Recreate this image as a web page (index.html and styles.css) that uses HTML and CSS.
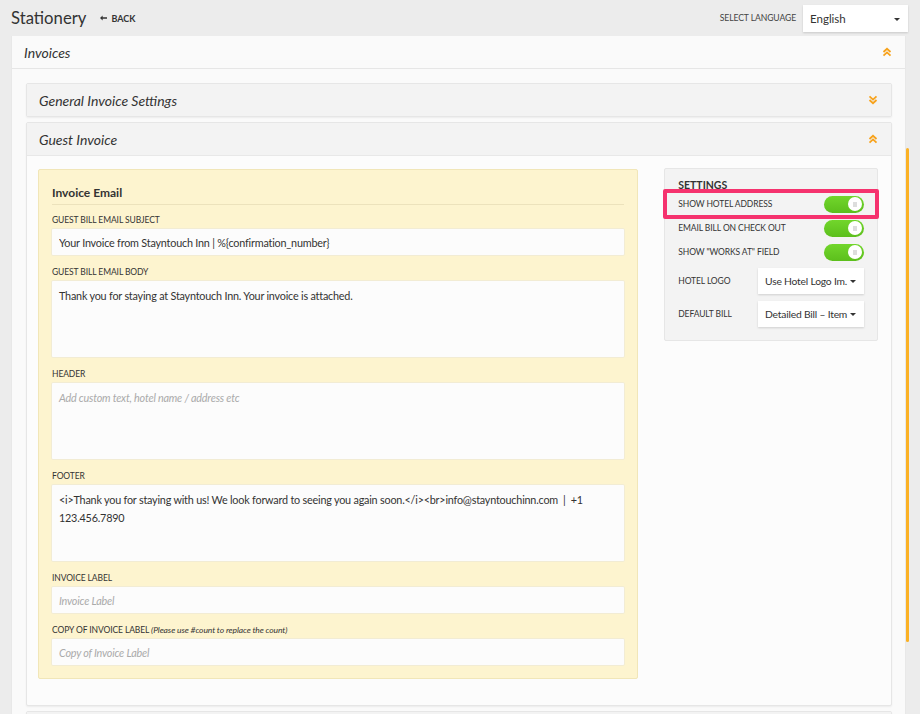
FILE: index.html
```html
<!DOCTYPE html>
<html lang="en">
<head>
    <meta charset="UTF-8">
    <meta name="viewport" content="width=device-width, initial-scale=1.0">
    <title>Stationery</title>
    <link rel="stylesheet" href="styles.css">
</head>
<body>
    <header class="topbar">
        <div class="title-wrap">
            <h1 class="page-title">Stationery</h1>
            <a class="back-link" href="#">
                <svg class="back-arrow" viewBox="0 0 8 6"><path d="M0 3 L3 0.2 L3 2.1 L8 2.1 L8 3.9 L3 3.9 L3 5.8 Z" /></svg>Back
            </a>
        </div>
        <div class="lang-wrap">
            <span class="lang-label">Select Language</span>
            <div class="select lang-select">English<span class="caret"></span></div>
        </div>
    </header>

    <main class="panel">
        <div class="panel-head">
            <span class="panel-title">Invoices</span>
            <svg class="chev" viewBox="0 0 10 10"><path d="M1.5 5 L5 1.8 L8.5 5 M1.5 8.6 L5 5.4 L8.5 8.6" /></svg>
        </div>
        <div class="panel-body">
            <section class="sub-panel">
                <div class="sub-head">
                    <span class="sub-title">General Invoice Settings</span>
                    <svg class="chev" viewBox="0 0 10 10"><path d="M1.5 1.4 L5 4.6 L8.5 1.4 M1.5 5 L5 8.2 L8.5 5" /></svg>
                </div>
            </section>

            <section class="sub-panel">
                <div class="sub-head">
                    <span class="sub-title">Guest Invoice</span>
                    <svg class="chev" viewBox="0 0 10 10"><path d="M1.5 5 L5 1.8 L8.5 5 M1.5 8.6 L5 5.4 L8.5 8.6" /></svg>
                </div>
                <div class="sub-body">
                    <div class="email-box">
                        <h2 class="box-title">Invoice Email</h2>

                        <div class="field">
                            <label class="field-label">Guest Bill Email Subject</label>
                            <input class="input" type="text" value="Your Invoice from Stayntouch Inn | %{confirmation_number}">
                        </div>
                        <div class="field">
                            <label class="field-label">Guest Bill Email Body</label>
                            <textarea class="input area">Thank you for staying at Stayntouch Inn. Your invoice is attached.</textarea>
                        </div>
                        <div class="field">
                            <label class="field-label">Header</label>
                            <textarea class="input area" placeholder="Add custom text, hotel name / address etc"></textarea>
                        </div>
                        <div class="field">
                            <label class="field-label">Footer</label>
                            <textarea class="input area">&lt;i&gt;Thank you for staying with us! We look forward to seeing you again soon.&lt;/i&gt;&lt;br&gt;info@stayntouchinn.com  |  +1
123.456.7890</textarea>
                        </div>
                        <div class="field">
                            <label class="field-label">Invoice Label</label>
                            <input class="input" type="text" placeholder="Invoice Label">
                        </div>
                        <div class="field">
                            <label class="field-label">Copy of Invoice Label <em class="hint">(Please use #count to replace the count)</em></label>
                            <input class="input" type="text" placeholder="Copy of Invoice Label">
                        </div>
                    </div>

                    <div class="settings-box">
                        <h3 class="settings-title">Settings</h3>
                        <div class="setting-row highlighted">
                            <span class="setting-label">Show Hotel Address</span>
                            <span class="toggle"><span class="knob"></span></span>
                        </div>
                        <div class="setting-row">
                            <span class="setting-label">Email Bill on Check Out</span>
                            <span class="toggle"><span class="knob"></span></span>
                        </div>
                        <div class="setting-row">
                            <span class="setting-label">Show "Works At" Field</span>
                            <span class="toggle"><span class="knob"></span></span>
                        </div>
                        <div class="setting-row select-row first-select">
                            <span class="setting-label">Hotel Logo</span>
                            <div class="select small-select">Use Hotel Logo Im.<span class="caret"></span></div>
                        </div>
                        <div class="setting-row select-row">
                            <span class="setting-label">Default Bill</span>
                            <div class="select small-select">Detailed Bill &ndash; Item<span class="caret"></span></div>
                        </div>
                    </div>
                </div>
            </section>

            <section class="sub-panel">
                <div class="sub-head"></div>
            </section>
        </div>
    </main>

    <div class="scroll-thumb"></div>
</body>
</html>
```

FILE: styles.css
```css
html, body {
    overflow: hidden;
}
body {
    margin: 0;
    padding: 0;
    font-family: "Lato", "Noto Sans", sans-serif;
    color: #333;
    background-color: #ececec;
}
.topbar {
    height: 36px;
    display: flex;
    align-items: center;
    justify-content: space-between;
    padding: 0 12px 0 11px;
    box-sizing: border-box;
}
.title-wrap {
    display: flex;
    align-items: center;
}
.page-title {
    margin: 0;
    font-size: 16.7px;
    font-weight: normal;
    color: #333;
}
.back-link {
    margin-left: 14px;
    font-size: 9px;
    font-weight: bold;
    text-transform: uppercase;
    color: #333;
    text-decoration: none;
    display: flex;
    align-items: center;
}
.back-arrow {
    width: 7px;
    height: 6px;
    fill: #333;
    margin-right: 4px;
}
.lang-wrap {
    display: flex;
    align-items: center;
}
.lang-label {
    font-size: 8.6px;
    letter-spacing: -0.1px;
    text-transform: uppercase;
    color: #444;
    margin-right: 7px;
}
.select {
    position: relative;
    background-color: #fff;
    box-shadow: 0 1px 2px rgba(0, 0, 0, 0.15);
    box-sizing: border-box;
    color: #333;
    white-space: nowrap;
    overflow: hidden;
}
.caret {
    position: absolute;
    right: 8px;
    top: 50%;
    margin-top: -1px;
    border-left: 3px solid transparent;
    border-right: 3px solid transparent;
    border-top: 3px solid #333;
}
.lang-select {
    width: 105px;
    height: 27px;
    line-height: 27px;
    padding-left: 7px;
    font-size: 11.5px;
    margin-top: 1px;
}
.panel {
    margin: 0 14px 0 11px;
    background-color: #fafafa;
    border-left: 1px solid #e8e8e8;
    border-right: 1px solid #e8e8e8;
    min-height: 700px;
}
.panel-head {
    height: 32px;
    display: flex;
    align-items: center;
    justify-content: space-between;
    padding: 0 13px 0 12px;
    border-bottom: 1px solid #e6e6e6;
}
.panel-title {
    font-size: 14px;
    font-style: italic;
    color: #333;
}
.chev {
    width: 10px;
    height: 10px;
    fill: none;
    stroke: #f7a21b;
    stroke-width: 1.8;
}
.panel-body {
    padding: 14px 13px 0 14px;
    display: flex;
    flex-direction: column;
    gap: 5px;
}
.sub-panel {
    background-color: #fcfcfc;
    border: 1px solid #e6e6e6;
    border-radius: 2px;
    box-shadow: 0 1px 2px rgba(0, 0, 0, 0.06);
}
.sub-head {
    height: 32px;
    background-color: #f3f3f3;
    display: flex;
    align-items: center;
    justify-content: space-between;
    padding: 0 13px 0 12px;
}
.sub-title {
    font-size: 14px;
    font-style: italic;
    color: #333;
}
.sub-body {
    display: flex;
    align-items: flex-start;
    gap: 26px;
    padding: 13px 13px 26px 11px;
    border-top: 1px solid #e8e8e8;
}
.email-box {
    width: 601px;
    box-sizing: border-box;
    background-color: #fdf4cf;
    border: 1px solid #f1e6b8;
    border-radius: 2px;
    padding: 13px;
}
.box-title {
    margin: 0;
    font-size: 12px;
    font-weight: bold;
    color: #333;
    line-height: 19px;
    padding-bottom: 2px;
    border-bottom: 1px solid #ece2bc;
}
.field {
    margin-top: 11px;
}
.field:first-of-type {
    margin-top: 9px;
}
.field-label {
    display: block;
    font-size: 8.5px;
    letter-spacing: -0.1px;
    line-height: 12px;
    text-transform: uppercase;
    color: #333;
    margin-bottom: 3px;
}
.hint {
    text-transform: none;
    font-size: 8.5px;
}
.input {
    display: block;
    width: 100%;
    box-sizing: border-box;
    height: 26px;
    border: none;
    border-radius: 1px;
    background-color: #fcfcfc;
    box-shadow: 0 0 0 1px #f2ecd4;
    padding: 0 7px;
    font-family: "Lato", "Noto Sans", sans-serif;
    font-size: 10.8px;
    letter-spacing: -0.2px;
    color: #333;
    outline: none;
}
.area {
    height: 76px;
    padding: 6px 7px;
    line-height: 18px;
    resize: none;
}
.input::placeholder {
    font-style: italic;
    color: #aaa;
}
.settings-box {
    width: 214px;
    box-sizing: border-box;
    margin-top: -1px;
    background-color: #f3f3f3;
    border: 1px solid #e6e6e6;
    border-radius: 2px;
    padding: 10px 13px 13px 13px;
}
.settings-title {
    margin: 0;
    font-size: 10.5px;
    line-height: 13px;
    font-weight: bold;
    text-transform: uppercase;
    color: #333;
}
.setting-row {
    position: relative;
    height: 24px;
    display: flex;
    align-items: center;
    justify-content: space-between;
}
.setting-label {
    font-size: 8.5px;
    letter-spacing: -0.1px;
    text-transform: uppercase;
    color: #333;
}
.highlighted::before {
    content: "";
    position: absolute;
    left: -15px;
    right: -15px;
    top: -3px;
    bottom: -3px;
    border: 4px solid #f5326e;
    border-radius: 2px;
}
.toggle {
    position: relative;
    width: 40px;
    height: 17px;
    border-radius: 9px;
    background: linear-gradient(#72d62c, #5cbf1c);
}
.knob {
    position: absolute;
    right: 2px;
    top: 1.5px;
    width: 14px;
    height: 14px;
    border-radius: 50%;
    background-color: #fff;
}
.knob::after {
    content: "";
    position: absolute;
    left: 5px;
    top: 4.5px;
    width: 4px;
    height: 5px;
    background-color: #ddd;
}
.select-row {
    height: 26px;
    margin-top: 7px;
}
.first-select {
    margin-top: 4px;
}
.small-select {
    width: 106px;
    height: 26px;
    line-height: 26px;
    padding-left: 7px;
    font-size: 10.3px;
    letter-spacing: -0.2px;
}
.scroll-thumb {
    position: fixed;
    left: 906px;
    top: 148px;
    width: 3px;
    height: 494px;
    border-radius: 2px;
    background-color: #fbb124;
}
```
